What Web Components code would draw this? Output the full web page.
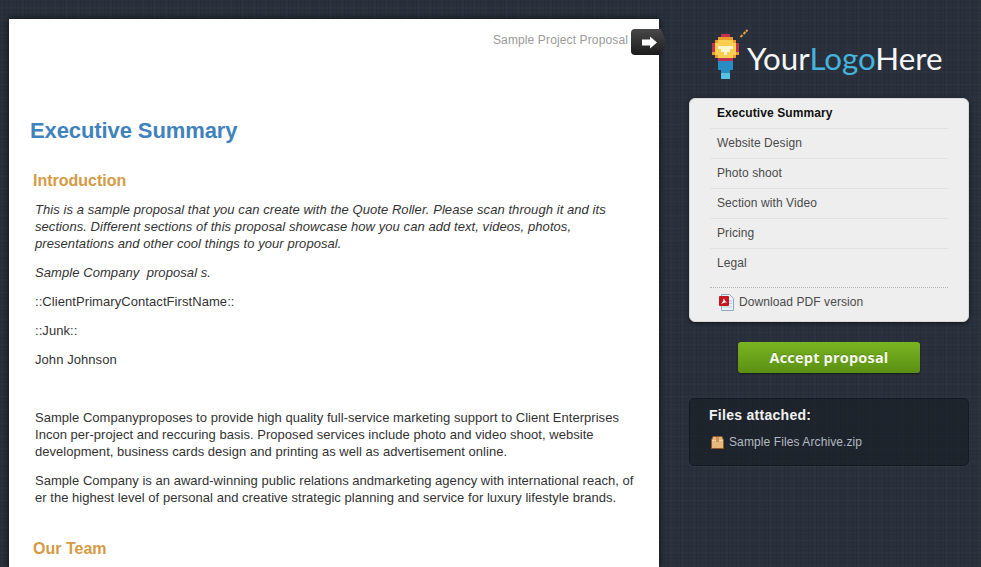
<!DOCTYPE html>
<html lang="en">
<head>
<meta charset="UTF-8" />
<title>Sample Project Proposal</title>
<style>
  html, body { margin: 0; height: 100%; overflow: hidden; }
  body {
    width: 981px;
    height: 567px;
    display: flex;
    align-items: flex-start;
    font-family: "Liberation Sans", Arial, sans-serif;
    background-color: #2a313c;
    background-image:
      repeating-linear-gradient(0deg, rgba(0,0,0,.06) 0 1px, transparent 1px 4px),
      repeating-linear-gradient(90deg, rgba(0,0,0,.06) 0 1px, transparent 1px 4px),
      repeating-linear-gradient(90deg, rgba(255,255,255,.012) 0 2px, transparent 2px 11px),
      repeating-linear-gradient(0deg, rgba(255,255,255,.012) 0 2px, transparent 2px 13px);
  }
</style>
</head>
<body>
  <proposal-paper title-text="Sample Project Proposal">
    <h1 slot="heading">Executive Summary</h1>
    <proposal-section heading="Introduction">
      <p class="lead"><i>This is a sample proposal that you can create with the Quote Roller. Please scan through it and its<br>sections. Different sections of this proposal showcase how you can add text, videos, photos,<br>presentations and other cool things to your proposal.</i></p>
      <p class="lead"><i>Sample Company&nbsp; proposal s.</i></p>
      <p class="lead">::ClientPrimaryContactFirstName::</p>
      <p class="lead">::Junk::</p>
      <p class="lead gap">John Johnson</p>
      <p>Sample Companyproposes to provide high quality full-service marketing support to Client Enterprises<br>Incon per-project and reccuring basis. Proposed services include photo and video shoot, website<br>development, business cards design and printing as well as advertisement online.</p>
      <p>Sample Company is an award-winning public relations andmarketing agency with international reach, of<br>er the highest level of personal and creative strategic planning and service for luxury lifestyle brands.</p>
    </proposal-section>
    <proposal-section heading="Our Team"></proposal-section>
  </proposal-paper>

  <proposal-sidebar>
    <logo-mark></logo-mark>
    <side-nav>
      <nav-item active>Executive Summary</nav-item>
      <nav-item>Website Design</nav-item>
      <nav-item>Photo shoot</nav-item>
      <nav-item>Section with Video</nav-item>
      <nav-item>Pricing</nav-item>
      <nav-item>Legal</nav-item>
      <pdf-link slot="footer">Download PDF version</pdf-link>
    </side-nav>
    <accept-button>Accept proposal</accept-button>
    <files-box heading="Files attached:">
      <file-link>Sample Files Archive.zip</file-link>
    </files-box>
  </proposal-sidebar>

  <script>
    class ProposalPaper extends HTMLElement {
      connectedCallback() {
        this.attachShadow({ mode: "open" });
        this.shadowRoot.innerHTML = `
          <style>
            :host {
              display: block;
              position: relative;
              box-sizing: border-box;
              width: 650px;
              height: 548px;
              margin: 19px 0 0 9px;
              flex: none;
              background: #fff;
              box-shadow: 0 0 6px 1px rgba(0,0,0,.55);
            }
            .clip { height: 100%; overflow: hidden; box-sizing: border-box; padding: 98px 10px 0 21px; }
            .top {
              position: absolute; right: 31px; top: 14px;
              font-size: 12px; line-height: 15px; letter-spacing: .13px; color: #9a9a9a;
            }
            .tab {
              position: absolute; left: 622px; top: 10px;
              width: 35px; height: 26px;
            }
            ::slotted(h1) {
              margin: 0 0 26px;
              font-size: 22px; line-height: 28px; font-weight: bold;
              letter-spacing: -.1px;
              color: #3f83bd;
            }
          </style>
          <div class="clip"><slot name="heading"></slot><slot></slot></div>
          <span class="top">${this.getAttribute("title-text")}</span>
          <svg class="tab" viewBox="0 0 35 26" aria-hidden="true">
            <defs><linearGradient id="t" x1="0" y1="0" x2="0" y2="1">
              <stop offset="0" stop-color="#484848"/><stop offset="1" stop-color="#1c1c1c"/>
            </linearGradient></defs>
            <path d="M4 0H30L35 13L30 26H4Q0 26 0 22V4Q0 0 4 0Z" fill="url(#t)"/>
            <path d="M11 10.500H19V7.500L26 13.500L19 19.500V16.500H11Z" fill="#fff"/>
          </svg>`;
      }
    }

    class ProposalSection extends HTMLElement {
      connectedCallback() {
        this.attachShadow({ mode: "open" });
        this.shadowRoot.innerHTML = `
          <style>
            :host { display: block; }
            h2 {
              margin: 0 0 10px 3px;
              font-size: 16px; line-height: 20px; font-weight: bold;
              color: #d69a45;
            }
            .body { padding-left: 5px; font-size: 13px; line-height: 17px; letter-spacing: .03px; color: #333; margin-bottom: 33px; white-space: nowrap; }
            ::slotted(p) { margin: 0 0 12px; }
            ::slotted(p.lead) { margin-bottom: 12px; letter-spacing: .07px; }
            ::slotted(p.gap) { margin-bottom: 41px; }
          </style>
          <h2>${this.getAttribute("heading")}</h2>
          <div class="body"><slot></slot></div>`;
      }
    }

    class ProposalSidebar extends HTMLElement {
      connectedCallback() {
        this.attachShadow({ mode: "open" });
        this.shadowRoot.innerHTML = `
          <style>
            :host {
              display: flex; flex-direction: column; align-items: stretch;
              width: 280px; flex: none; margin-left: 30px;
            }
          </style>
          <slot></slot>`;
      }
    }

    class LogoMark extends HTMLElement {
      connectedCallback() {
        this.attachShadow({ mode: "open" });
        const colors = { r: "#c4304f", o: "#ef9a2d", y: "#f9cf52", w: "#fff6d0", b: "#2a8cc4", l: "#57c3e3" };
        const rows = [
          "...rrr...",
          "..ooooo..",
          ".oyyyyyo.",
          "ryyyyyyyr",
          "rywwwwwyr",
          "ryywwwyyr",
          "oyyywyyyo",
          ".oyyyyyo.",
          "..rrrrr..",
          "..bbbbb..",
          "..bbbbb..",
          "..bbbbb..",
          "...bbb...",
          "...lll...",
          "...lll..."
        ];
        let cells = "";
        rows.forEach((row, y) => [...row].forEach((c, x) => {
          if (colors[c]) cells += `<rect x="${x * 3}" y="${y * 3 + 8}" width="3" height="3" fill="${colors[c]}"/>`;
        }));
        this.shadowRoot.innerHTML = `
          <style>
            :host {
              display: flex; align-items: flex-start;
              height: 98px; box-sizing: border-box; padding: 26px 0 0 23px;
            }
            svg { width: 36px; height: 53px; flex: none; filter: blur(.4px); }
            span {
              margin: 14px 0 0 -1px;
              font: 400 31.300px/36px Lato, sans-serif;
              color: #f4f6f7;
            }
            b { font-weight: 400; color: #45b3dc; }
          </style>
          <svg viewBox="0 0 36 53" aria-hidden="true">
            ${cells}
            <path d="M28.500 11l2-2M31.500 8l2-2M34 5.500l1.500-1.500" stroke="#e7a33a" stroke-width="2" fill="none"/>
          </svg>
          <span>Your<b>Logo</b>Here</span>`;
      }
    }

    class SideNav extends HTMLElement {
      connectedCallback() {
        this.attachShadow({ mode: "open" });
        this.shadowRoot.innerHTML = `
          <style>
            :host {
              display: block;
              height: 224px; box-sizing: border-box;
              padding: 0 20px 0 20px;
              background: #eeeeee;
              border-radius: 6px;
              border: 1px solid #d8d8d8;
              box-shadow: 0 1px 4px rgba(0,0,0,.6);
            }
            .foot { border-top: 1px dotted #b5b5b5; margin-top: 8px; }
          </style>
          <slot></slot>
          <div class="foot"><slot name="footer"></slot></div>`;
      }
    }

    class NavItem extends HTMLElement {
      connectedCallback() {
        this.attachShadow({ mode: "open" });
        this.shadowRoot.innerHTML = `
          <style>
            :host {
              display: block;
              height: 30px; box-sizing: border-box;
              padding: 7px 0 0 7px;
              font-size: 12px; line-height: 15px; letter-spacing: .08px;
              color: #4a4a4a;
              border-bottom: 1px solid #e2e2e2;
            }
            :host([active]) { color: #111; font-weight: bold; }
            :host(:nth-of-type(6)) { border-bottom: 0; }
          </style>
          <slot></slot>`;
      }
    }

    class PdfLink extends HTMLElement {
      connectedCallback() {
        this.attachShadow({ mode: "open" });
        this.shadowRoot.innerHTML = `
          <style>
            :host {
              display: flex; align-items: center; gap: 5px;
              padding: 5px 0 0 9px;
              font-size: 12px; line-height: 18px; letter-spacing: .08px; color: #4a4a4a;
            }
            svg { width: 15px; height: 17px; flex: none; }
          </style>
          <svg viewBox="0 0 15 17" aria-hidden="true">
            <path d="M2.500 .5H10.500L14.500 4.500V16.500H2.500Z" fill="#e8f0f8" stroke="#8fa9c4"/>
            <path d="M10 7H13M10 9.500H13M4 13H13" stroke="#b9cde0"/>
            <rect x="0" y="2" width="10" height="10" rx="1" fill="#c5161d"/>
            <path d="M2 10C3.500 8.500 4.500 6 5 4C5.500 6.500 6.500 8 8.500 8.500C6.500 8.200 4 8.800 2 10Z" fill="#fff"/>
          </svg>
          <span><slot></slot></span>`;
      }
    }

    class AcceptButton extends HTMLElement {
      connectedCallback() {
        this.attachShadow({ mode: "open" });
        this.shadowRoot.innerHTML = `
          <style>
            :host { display: flex; justify-content: center; padding-top: 20px; }
            button {
              all: unset;
              display: block; width: 182px; height: 31px; box-sizing: border-box;
              text-align: center;
              font: bold 14.500px/30px "Open Sans", "Liberation Sans", sans-serif;
              letter-spacing: .2px;
              color: #f5f8ec;
              border-radius: 3px;
              background: linear-gradient(#7ab422, #5a9012);
              box-shadow: 0 1px 2px rgba(0,0,0,.5);
              text-shadow: 0 -1px 0 rgba(0,0,0,.2);
            }
          </style>
          <button><slot></slot></button>`;
      }
    }

    class FilesBox extends HTMLElement {
      connectedCallback() {
        this.attachShadow({ mode: "open" });
        this.shadowRoot.innerHTML = `
          <style>
            :host {
              display: block; margin-top: 25px;
              height: 68px; box-sizing: border-box;
              padding: 8px 19px;
              background: rgba(20,25,33,.55);
              border: 1px solid #161b23;
              border-radius: 5px;
              box-shadow: 0 1px 0 rgba(255,255,255,.04);
            }
            h3 {
              margin: 0 0 9px;
              font-size: 14px; line-height: 17px; font-weight: bold; letter-spacing: .28px;
              color: #f2f2f2;
            }
          </style>
          <h3>${this.getAttribute("heading")}</h3>
          <slot></slot>`;
      }
    }

    class FileLink extends HTMLElement {
      connectedCallback() {
        this.attachShadow({ mode: "open" });
        this.shadowRoot.innerHTML = `
          <style>
            :host {
              display: flex; align-items: center; gap: 5px;
              padding-left: 2px;
              font-size: 12px; line-height: 18px; letter-spacing: .1px; color: #b4bac2;
            }
            svg { width: 13px; height: 13px; flex: none; }
          </style>
          <svg viewBox="0 0 13 13" aria-hidden="true">
            <path d="M2 .5H11L12.500 4V12.500H.5V4Z" fill="#e8b77c" stroke="#8a5a2a"/>
            <path d="M1 4.500H12" stroke="#f3d3a4"/>
            <rect x="5" y="1" width="3" height="5" fill="#c99457"/>
          </svg>
          <span><slot></slot></span>`;
      }
    }

    customElements.define("proposal-paper", ProposalPaper);
    customElements.define("proposal-section", ProposalSection);
    customElements.define("proposal-sidebar", ProposalSidebar);
    customElements.define("logo-mark", LogoMark);
    customElements.define("side-nav", SideNav);
    customElements.define("nav-item", NavItem);
    customElements.define("pdf-link", PdfLink);
    customElements.define("accept-button", AcceptButton);
    customElements.define("files-box", FilesBox);
    customElements.define("file-link", FileLink);
  </script>
</body>
</html>
